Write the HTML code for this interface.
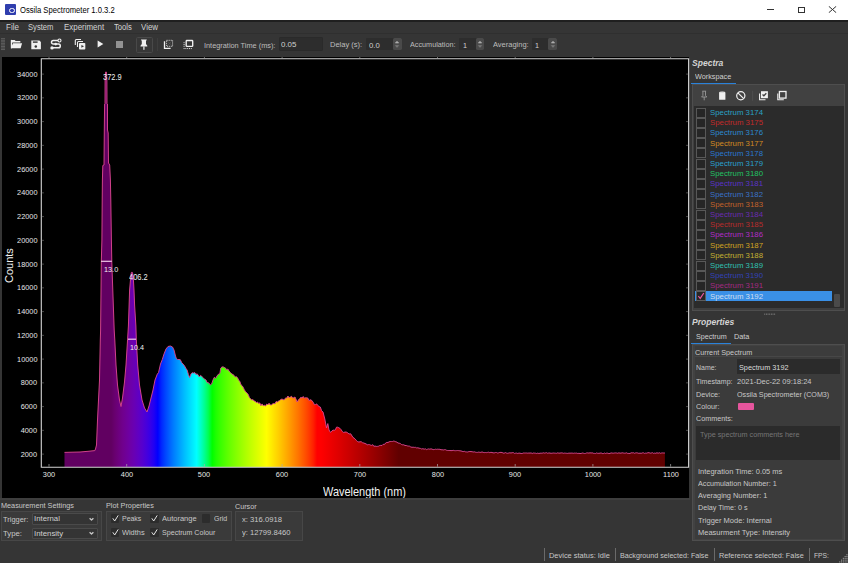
<!DOCTYPE html><html><head><meta charset='utf-8'><style>
*{margin:0;padding:0;box-sizing:border-box}
html,body{width:848px;height:563px;overflow:hidden;background:#353535}
body{position:relative;font-family:"Liberation Sans",sans-serif;color:#c8c8c8;font-size:7.5px}
.a{position:absolute;white-space:nowrap}
.t{position:absolute;white-space:nowrap;line-height:10px}
</style></head><body><div class="a" style="left:0;top:0;width:848px;height:20px;background:#fff"></div><div class="a" style="left:4.7px;top:4px;width:10.9px;height:10.6px;background:#2f3eae;border-radius:1px"></div><div class="a" style="left:8.8px;top:7.6px;width:5.8px;height:5.8px;border:1.4px solid #fff;border-radius:50%"></div><div class="t" style="top:4.00px;font-size:9.03px;line-height:12px;color:#000;left:19.50px;transform-origin:0 50%;transform:scaleX(0.8475);">Ossila Spectrometer 1.0.3.2</div><div class="a" style="left:767px;top:9px;width:7px;height:1px;background:#333"></div><div class="a" style="left:797.5px;top:6.5px;width:7px;height:6px;border:1px solid #333"></div><svg class="a" style="left:828px;top:6px" width="9" height="7" viewBox="0 0 9 7"><path d="M0.8,0.3 L8.2,6.7 M8.2,0.3 L0.8,6.7" stroke="#333" stroke-width="1"/></svg><div class="a" style="left:0;top:20.2px;width:848px;height:1.6px;background:#1f1f1f"></div><div class="t" style="top:21.40px;font-size:8.30px;line-height:12px;color:#d2d2d2;left:6.00px;transform-origin:0 50%;transform:scaleX(0.9645);">File</div><div class="t" style="top:21.40px;font-size:8.30px;line-height:12px;color:#d2d2d2;left:27.80px;transform-origin:0 50%;transform:scaleX(0.9179);">System</div><div class="t" style="top:21.40px;font-size:8.30px;line-height:12px;color:#d2d2d2;left:63.70px;transform-origin:0 50%;transform:scaleX(0.9552);">Experiment</div><div class="t" style="top:21.40px;font-size:8.30px;line-height:12px;color:#d2d2d2;left:113.80px;transform-origin:0 50%;transform:scaleX(0.9238);">Tools</div><div class="t" style="top:21.40px;font-size:8.30px;line-height:12px;color:#d2d2d2;left:141.30px;transform-origin:0 50%;transform:scaleX(0.9529);">View</div><div class="a" style="left:0.00px;top:33.40px;width:848.00px;height:0.70px;background:#2f2f2f;"></div><svg class="a" style="left:1px;top:38.4px" width="4.5" height="12.5" viewBox="0 0 4.5 12.5"><rect x="0.4" y="0.20" width="1.2" height="1" fill="#7c7c7c"/><rect x="0.4" y="1.75" width="1.2" height="1" fill="#7c7c7c"/><rect x="0.4" y="3.30" width="1.2" height="1" fill="#7c7c7c"/><rect x="0.4" y="4.85" width="1.2" height="1" fill="#7c7c7c"/><rect x="0.4" y="6.40" width="1.2" height="1" fill="#7c7c7c"/><rect x="0.4" y="7.95" width="1.2" height="1" fill="#7c7c7c"/><rect x="0.4" y="9.50" width="1.2" height="1" fill="#7c7c7c"/><rect x="0.4" y="11.05" width="1.2" height="1" fill="#7c7c7c"/><rect x="2.4" y="0.20" width="1.2" height="1" fill="#7c7c7c"/><rect x="2.4" y="1.75" width="1.2" height="1" fill="#7c7c7c"/><rect x="2.4" y="3.30" width="1.2" height="1" fill="#7c7c7c"/><rect x="2.4" y="4.85" width="1.2" height="1" fill="#7c7c7c"/><rect x="2.4" y="6.40" width="1.2" height="1" fill="#7c7c7c"/><rect x="2.4" y="7.95" width="1.2" height="1" fill="#7c7c7c"/><rect x="2.4" y="9.50" width="1.2" height="1" fill="#7c7c7c"/><rect x="2.4" y="11.05" width="1.2" height="1" fill="#7c7c7c"/></svg><svg class="a" style="left:10px;top:39px" width="13" height="11" viewBox="0 0 13 11">
<path d="M0.9,1.2 Q0.9,0.9 1.2,0.9 L4.6,0.9 L5.7,2 L10.1,2 Q10.4,2 10.4,2.3 L10.4,8 L0.9,9.3 Z" fill="#f0f0f0"/>
<path d="M2.3,3.5 L12.6,3.5 L11,9.8 L0.4,9.8 Z" fill="#353535"/>
<path d="M2.9,4.3 L12.1,4.3 L10.6,9.3 L0.9,9.3 Z" fill="#f0f0f0"/>
<rect x="0.9" y="0.9" width="1.1" height="8.4" fill="#f0f0f0"/></svg><svg class="a" style="left:31px;top:39.5px" width="10.5" height="10" viewBox="0 0 10.5 10">
<path d="M0.3,0.5 L8.4,0.5 L9.9,2 L9.9,9.2 L0.3,9.2 Z" fill="#f0f0f0"/>
<rect x="1.9" y="1.4" width="4.7" height="1.4" fill="#353535"/>
<circle cx="4.8" cy="6.6" r="1.25" fill="#353535"/></svg><svg class="a" style="left:48px;top:37px" width="16" height="15" viewBox="0 0 16 15">
<path d="M10,3.5 L5.3,3.5 A1.8,1.8 0 0 0 5.3,7.1 L10.5,7.1 A1.8,1.8 0 0 1 10.5,10.7 L4.5,10.7" fill="none" stroke="#f0f0f0" stroke-width="1.5"/>
<circle cx="11.5" cy="3.5" r="1.5" fill="none" stroke="#f0f0f0" stroke-width="1.1"/>
<circle cx="4" cy="10.9" r="1.7" fill="#f0f0f0"/>
<circle cx="7.7" cy="7.1" r="1.3" fill="#f0f0f0"/></svg><svg class="a" style="left:72px;top:37px" width="16" height="15" viewBox="0 0 16 15">
<path d="M3.3,8 L3.3,3.6 Q3.3,2.5 4.4,2.5 L9,2.5" fill="none" stroke="#f0f0f0" stroke-width="1.1"/>
<path d="M5.5,10 L5.5,5.6 Q5.5,4.5 6.6,4.5 L11,4.5" fill="none" stroke="#f0f0f0" stroke-width="1.1"/>
<rect x="7" y="6" width="6.3" height="6.5" rx="0.8" fill="#f0f0f0"/>
<path d="M9.4,7.9 L12,9.3 L9.4,10.7 Z" fill="#353535"/></svg><svg class="a" style="left:97px;top:40.1px" width="7" height="8" viewBox="0 0 7 8"><path d="M0.6,0.5 L6.3,4 L0.6,7.5 Z" fill="#f0f0f0"/></svg><div class="a" style="left:116.20px;top:41.20px;width:6.60px;height:6.70px;background:#929292;"></div><div class="a" style="left:135.50px;top:36.50px;width:17.00px;height:16.50px;background:#373737;border:1px solid #494949;border-radius:1.5px"></div><svg class="a" style="left:140px;top:38.5px" width="8" height="12" viewBox="0 0 8 12">
<path d="M0.9,0.4 L6.9,0.4 L6.3,1.6 L6,2.2 L6,4.9 L7.3,6.8 L7.3,7.4 L0.5,7.4 L0.5,6.8 L1.8,4.9 L1.8,2.2 L1.5,1.6 Z" fill="#f0f0f0"/>
<rect x="3.3" y="7.4" width="1.2" height="3.4" fill="#f0f0f0"/></svg><div class="a" style="left:157.00px;top:38.00px;width:0.70px;height:13.00px;background:#3e3e3e;"></div><svg class="a" style="left:160px;top:37px" width="16" height="15" viewBox="0 0 16 15">
<path d="M4.5,4.2 L4.5,11.3 L10.6,11.3" fill="none" stroke="#f0f0f0" stroke-width="1.3"/>
<rect x="6.6" y="3.3" width="6" height="6" fill="none" stroke="#f0f0f0" stroke-width="0.9" stroke-dasharray="1,1.05"/>
<path d="M7,3.7 L12.2,8.9 M12.2,3.7 L7,8.9" stroke="#f0f0f0" stroke-width="0.5" opacity="0.25"/></svg><svg class="a" style="left:180px;top:37px" width="16" height="15" viewBox="0 0 16 15">
<rect x="6.2" y="3.5" width="6.5" height="5.9" rx="0.7" fill="none" stroke="#f0f0f0" stroke-width="1.35"/><rect x="3.6" y="5.2" width="0.95" height="0.95" fill="#f0f0f0"/><rect x="3.6" y="7.0" width="0.95" height="0.95" fill="#f0f0f0"/><rect x="3.6" y="8.8" width="0.95" height="0.95" fill="#f0f0f0"/><rect x="3.6" y="11.1" width="0.95" height="0.95" fill="#f0f0f0"/><rect x="5.4" y="11.1" width="0.95" height="0.95" fill="#f0f0f0"/><rect x="7.2" y="11.1" width="0.95" height="0.95" fill="#f0f0f0"/><rect x="9.0" y="11.1" width="0.95" height="0.95" fill="#f0f0f0"/><rect x="10.8" y="11.1" width="0.95" height="0.95" fill="#f0f0f0"/></svg><div class="t" style="top:39.60px;font-size:8.00px;line-height:12px;color:#bdbdbd;left:204.10px;transform-origin:0 50%;transform:scaleX(0.9177);">Integration Time (ms):</div><div class="a" style="left:279.30px;top:37.00px;width:43.60px;height:13.90px;background:#2d2d2d;border:1px solid #2a2a2a;border-radius:1px"></div><div class="t" style="top:39.20px;font-size:8.00px;line-height:12px;color:#d0d0d0;left:280.70px;transform-origin:0 50%;transform:scaleX(0.9891);">0.05</div><div class="t" style="top:39.40px;font-size:8.00px;line-height:12px;color:#bdbdbd;left:330.20px;transform-origin:0 50%;transform:scaleX(0.9408);">Delay (s):</div><div class="a" style="left:366.20px;top:37.80px;width:35.70px;height:12.50px;background:#2d2d2d;border-radius:1px"></div><div class="a" style="left:393.00px;top:37.80px;width:8.90px;height:12.50px;background:#4a4a4a;border-radius:1.5px"></div><svg class="a" style="left:394.45px;top:37.8px" width="6" height="12.5" viewBox="0 0 6 12.5"><path d="M1.3,5 L3,3.2 L4.7,5 Z" fill="#b0b0b0" stroke="#b0b0b0" stroke-width="0.6" stroke-linejoin="round"/><path d="M1.3,7.6 L3,9.4 L4.7,7.6 Z" fill="#7a7a7a" stroke="#7a7a7a" stroke-width="0.6" stroke-linejoin="round"/></svg><div class="t" style="top:39.60px;font-size:8.00px;line-height:12px;color:#d0d0d0;left:368.80px;transform-origin:0 50%;transform:scaleX(0.9621);">0.0</div><div class="t" style="top:39.40px;font-size:8.00px;line-height:12px;color:#bdbdbd;left:409.60px;transform-origin:0 50%;transform:scaleX(0.9055);">Accumulation:</div><div class="a" style="left:458.70px;top:37.80px;width:25.50px;height:12.50px;background:#2d2d2d;border-radius:1px"></div><div class="a" style="left:475.80px;top:37.80px;width:8.40px;height:12.50px;background:#4a4a4a;border-radius:1.5px"></div><svg class="a" style="left:477.00px;top:37.8px" width="6" height="12.5" viewBox="0 0 6 12.5"><path d="M1.3,5 L3,3.2 L4.7,5 Z" fill="#b0b0b0" stroke="#b0b0b0" stroke-width="0.6" stroke-linejoin="round"/><path d="M1.3,7.6 L3,9.4 L4.7,7.6 Z" fill="#7a7a7a" stroke="#7a7a7a" stroke-width="0.6" stroke-linejoin="round"/></svg><div class="t" style="top:39.60px;font-size:8.00px;line-height:12px;color:#d0d0d0;left:462.50px;transform-origin:0 50%;transform:scaleX(0.8990);">1</div><div class="t" style="top:39.40px;font-size:8.00px;line-height:12px;color:#bdbdbd;left:492.60px;transform-origin:0 50%;transform:scaleX(0.9370);">Averaging:</div><div class="a" style="left:531.90px;top:37.80px;width:25.40px;height:12.50px;background:#2d2d2d;border-radius:1px"></div><div class="a" style="left:548.30px;top:37.80px;width:9.00px;height:12.50px;background:#4a4a4a;border-radius:1.5px"></div><svg class="a" style="left:549.80px;top:37.8px" width="6" height="12.5" viewBox="0 0 6 12.5"><path d="M1.3,5 L3,3.2 L4.7,5 Z" fill="#b0b0b0" stroke="#b0b0b0" stroke-width="0.6" stroke-linejoin="round"/><path d="M1.3,7.6 L3,9.4 L4.7,7.6 Z" fill="#7a7a7a" stroke="#7a7a7a" stroke-width="0.6" stroke-linejoin="round"/></svg><div class="t" style="top:39.60px;font-size:8.00px;line-height:12px;color:#d0d0d0;left:535.30px;transform-origin:0 50%;transform:scaleX(0.8990);">1</div><div class="a" style="left:2.00px;top:56.50px;width:687.00px;height:441.50px;background:#000;"></div><svg class="a" style="left:0;top:0" width="848" height="563" viewBox="0 0 848 563"><defs><linearGradient id="sg" gradientUnits="userSpaceOnUse" x1="49" y1="0" x2="670.6" y2="0"><stop offset="0.0000" stop-color="rgb(97,0,97)"/><stop offset="0.0063" stop-color="rgb(97,0,97)"/><stop offset="0.0125" stop-color="rgb(97,0,97)"/><stop offset="0.0187" stop-color="rgb(97,0,97)"/><stop offset="0.0250" stop-color="rgb(97,0,97)"/><stop offset="0.0312" stop-color="rgb(97,0,97)"/><stop offset="0.0375" stop-color="rgb(97,0,97)"/><stop offset="0.0437" stop-color="rgb(97,0,97)"/><stop offset="0.0500" stop-color="rgb(97,0,97)"/><stop offset="0.0563" stop-color="rgb(97,0,97)"/><stop offset="0.0625" stop-color="rgb(97,0,97)"/><stop offset="0.0688" stop-color="rgb(97,0,97)"/><stop offset="0.0750" stop-color="rgb(97,0,97)"/><stop offset="0.0813" stop-color="rgb(97,0,97)"/><stop offset="0.0875" stop-color="rgb(97,0,97)"/><stop offset="0.0938" stop-color="rgb(97,0,97)"/><stop offset="0.1000" stop-color="rgb(97,0,97)"/><stop offset="0.1062" stop-color="rgb(105,0,112)"/><stop offset="0.1125" stop-color="rgb(109,0,127)"/><stop offset="0.1187" stop-color="rgb(112,0,141)"/><stop offset="0.1250" stop-color="rgb(111,0,154)"/><stop offset="0.1313" stop-color="rgb(109,0,168)"/><stop offset="0.1375" stop-color="rgb(104,0,181)"/><stop offset="0.1437" stop-color="rgb(96,0,194)"/><stop offset="0.1500" stop-color="rgb(86,0,206)"/><stop offset="0.1562" stop-color="rgb(72,0,219)"/><stop offset="0.1625" stop-color="rgb(55,0,231)"/><stop offset="0.1688" stop-color="rgb(33,0,243)"/><stop offset="0.1750" stop-color="rgb(0,0,255)"/><stop offset="0.1812" stop-color="rgb(0,40,255)"/><stop offset="0.1875" stop-color="rgb(0,70,255)"/><stop offset="0.1938" stop-color="rgb(0,97,255)"/><stop offset="0.2000" stop-color="rgb(0,123,255)"/><stop offset="0.2062" stop-color="rgb(0,146,255)"/><stop offset="0.2125" stop-color="rgb(0,169,255)"/><stop offset="0.2188" stop-color="rgb(0,192,255)"/><stop offset="0.2250" stop-color="rgb(0,213,255)"/><stop offset="0.2313" stop-color="rgb(0,234,255)"/><stop offset="0.2375" stop-color="rgb(0,255,255)"/><stop offset="0.2437" stop-color="rgb(0,255,203)"/><stop offset="0.2500" stop-color="rgb(0,255,146)"/><stop offset="0.2562" stop-color="rgb(0,255,84)"/><stop offset="0.2625" stop-color="rgb(0,255,0)"/><stop offset="0.2687" stop-color="rgb(31,255,0)"/><stop offset="0.2750" stop-color="rgb(54,255,0)"/><stop offset="0.2812" stop-color="rgb(74,255,0)"/><stop offset="0.2875" stop-color="rgb(94,255,0)"/><stop offset="0.2938" stop-color="rgb(112,255,0)"/><stop offset="0.3000" stop-color="rgb(129,255,0)"/><stop offset="0.3063" stop-color="rgb(146,255,0)"/><stop offset="0.3125" stop-color="rgb(163,255,0)"/><stop offset="0.3187" stop-color="rgb(179,255,0)"/><stop offset="0.3250" stop-color="rgb(195,255,0)"/><stop offset="0.3312" stop-color="rgb(210,255,0)"/><stop offset="0.3375" stop-color="rgb(225,255,0)"/><stop offset="0.3438" stop-color="rgb(240,255,0)"/><stop offset="0.3500" stop-color="rgb(255,255,0)"/><stop offset="0.3563" stop-color="rgb(255,239,0)"/><stop offset="0.3625" stop-color="rgb(255,223,0)"/><stop offset="0.3688" stop-color="rgb(255,207,0)"/><stop offset="0.3750" stop-color="rgb(255,190,0)"/><stop offset="0.3812" stop-color="rgb(255,173,0)"/><stop offset="0.3875" stop-color="rgb(255,155,0)"/><stop offset="0.3937" stop-color="rgb(255,137,0)"/><stop offset="0.4000" stop-color="rgb(255,119,0)"/><stop offset="0.4062" stop-color="rgb(255,99,0)"/><stop offset="0.4125" stop-color="rgb(255,79,0)"/><stop offset="0.4188" stop-color="rgb(255,57,0)"/><stop offset="0.4250" stop-color="rgb(255,33,0)"/><stop offset="0.4313" stop-color="rgb(255,0,0)"/><stop offset="0.4375" stop-color="rgb(255,0,0)"/><stop offset="0.4437" stop-color="rgb(248,0,0)"/><stop offset="0.4500" stop-color="rgb(241,0,0)"/><stop offset="0.4562" stop-color="rgb(233,0,0)"/><stop offset="0.4625" stop-color="rgb(226,0,0)"/><stop offset="0.4688" stop-color="rgb(219,0,0)"/><stop offset="0.4750" stop-color="rgb(211,0,0)"/><stop offset="0.4813" stop-color="rgb(204,0,0)"/><stop offset="0.4875" stop-color="rgb(196,0,0)"/><stop offset="0.4938" stop-color="rgb(188,0,0)"/><stop offset="0.5000" stop-color="rgb(181,0,0)"/><stop offset="0.5062" stop-color="rgb(173,0,0)"/><stop offset="0.5125" stop-color="rgb(165,0,0)"/><stop offset="0.5188" stop-color="rgb(157,0,0)"/><stop offset="0.5250" stop-color="rgb(149,0,0)"/><stop offset="0.5312" stop-color="rgb(141,0,0)"/><stop offset="0.5375" stop-color="rgb(132,0,0)"/><stop offset="0.5437" stop-color="rgb(124,0,0)"/><stop offset="0.5500" stop-color="rgb(115,0,0)"/><stop offset="0.5563" stop-color="rgb(106,0,0)"/><stop offset="0.5625" stop-color="rgb(97,0,0)"/><stop offset="0.5687" stop-color="rgb(97,0,0)"/><stop offset="0.5750" stop-color="rgb(97,0,0)"/><stop offset="0.5813" stop-color="rgb(97,0,0)"/><stop offset="0.5875" stop-color="rgb(97,0,0)"/><stop offset="0.5938" stop-color="rgb(97,0,0)"/><stop offset="0.6000" stop-color="rgb(97,0,0)"/><stop offset="0.6062" stop-color="rgb(97,0,0)"/><stop offset="0.6125" stop-color="rgb(97,0,0)"/><stop offset="0.6188" stop-color="rgb(97,0,0)"/><stop offset="0.6250" stop-color="rgb(97,0,0)"/><stop offset="1.0000" stop-color="rgb(97,0,0)"/></linearGradient></defs><path d="M64.5,467 L64.5,452.4 L72.0,452.2 L80.0,452.0 L88.0,451.3 L94.8,450.6 L95.5,449.0 L96.5,445.0 L97.5,420.0 L98.5,400.0 L99.5,380.0 L100.3,340.0 L100.6,330.0 L101.3,262.0 L101.9,240.0 L102.2,200.0 L102.4,180.0 L102.8,165.5 L104.0,165.0 L104.3,130.0 L104.6,104.0 L105.0,103.5 L105.1,80.0 L105.6,72.0 L106.4,72.0 L106.9,80.0 L107.0,103.5 L107.5,104.0 L107.5,130.0 L108.2,133.0 L108.5,163.0 L109.7,165.0 L110.4,180.0 L110.8,200.0 L111.4,240.0 L111.8,262.0 L114.2,330.0 L114.8,340.0 L116.0,365.0 L117.5,385.0 L119.5,400.0 L121.0,406.5 L122.5,398.0 L124.5,382.0 L126.0,365.0 L127.6,339.0 L128.4,326.0 L129.1,305.0 L129.6,290.0 L130.8,276.0 L131.4,272.4 L132.4,272.4 L133.2,276.0 L134.0,290.0 L134.6,305.0 L135.9,326.0 L136.3,339.0 L137.7,365.0 L139.5,385.0 L142.0,400.0 L144.5,408.0 L147.0,412.0 L149.0,406.0 L151.0,398.0 L153.0,390.0 L155.0,380.0 L156.2,377.0 L157.3,374.1 L158.5,372.7 L160.5,364.0 L162.3,359.5 L164.0,354.0 L166.0,349.0 L168.0,346.5 L170.4,346.0 L172.5,347.0 L174.0,350.0 L175.5,356.0 L176.4,358.6 L177.7,359.5 L179.0,359.5 L180.3,359.7 L181.7,362.6 L183.0,364.0 L184.5,365.8 L186.0,368.5 L187.2,370.2 L188.4,374.5 L189.6,377.5 L191.1,373.7 L192.5,372.7 L193.7,373.1 L194.8,372.6 L196.0,374.5 L197.1,373.8 L198.3,375.3 L199.4,377.0 L200.5,375.4 L201.7,376.2 L202.8,377.5 L204.4,379.1 L206.0,380.0 L207.1,382.6 L208.2,382.7 L209.3,383.4 L210.4,385.0 L211.7,383.9 L213.0,380.0 L214.3,377.3 L215.7,378.4 L217.0,376.0 L218.4,374.2 L219.8,373.7 L220.8,368.0 L222.0,366.9 L223.2,366.9 L224.3,367.4 L225.5,368.0 L226.7,369.9 L227.8,369.0 L229.0,371.0 L230.3,372.4 L231.7,373.8 L233.0,374.6 L234.1,375.4 L235.3,377.0 L236.4,376.7 L237.6,377.8 L238.7,380.3 L239.8,381.3 L240.9,384.6 L242.1,385.7 L243.2,387.3 L244.3,389.7 L245.6,391.7 L246.8,393.0 L248.1,394.2 L249.4,397.4 L250.6,398.9 L251.9,400.0 L253.0,399.6 L254.1,401.0 L255.3,401.3 L256.4,402.7 L257.5,402.0 L258.6,403.4 L259.8,402.9 L260.9,405.7 L262.1,403.9 L263.2,405.8 L264.4,405.3 L265.6,406.1 L266.7,404.0 L267.9,404.8 L269.1,403.2 L270.2,404.9 L271.4,404.9 L272.6,403.9 L273.8,403.5 L275.0,403.8 L276.1,401.5 L277.3,402.0 L278.5,401.1 L279.6,400.5 L280.8,399.5 L282.0,399.0 L283.2,399.7 L284.4,399.7 L285.6,397.9 L286.8,398.1 L287.9,396.0 L289.1,397.6 L290.3,397.1 L291.5,396.3 L292.7,398.0 L293.8,397.7 L295.0,397.0 L297.2,402.0 L298.5,399.8 L299.7,398.5 L301.0,397.3 L302.1,398.1 L303.2,396.5 L304.4,398.2 L305.5,397.7 L306.6,397.8 L307.8,398.0 L308.9,400.5 L310.0,400.0 L311.1,399.8 L312.2,401.0 L313.3,402.4 L314.4,404.7 L315.5,404.5 L316.7,403.9 L317.9,405.6 L319.1,406.5 L320.3,407.0 L321.6,410.7 L323.0,412.0 L324.8,419.0 L326.5,428.0 L327.8,423.6 L329.0,430.0 L330.5,432.4 L333.0,430.0 L334.2,430.3 L335.4,429.7 L336.5,427.2 L337.7,427.2 L338.8,427.7 L339.9,428.3 L341.0,429.5 L342.3,431.5 L343.7,432.5 L345.0,432.0 L346.3,432.1 L347.7,432.8 L349.0,434.0 L350.7,433.8 L353.0,437.5 L354.1,438.1 L355.2,439.1 L356.4,440.5 L357.5,441.5 L358.8,442.0 L360.0,441.8 L361.2,441.7 L362.5,442.7 L363.8,443.0 L365.0,443.5 L366.1,443.9 L367.2,444.8 L368.3,444.6 L369.4,444.6 L370.6,445.1 L371.7,445.4 L372.8,444.7 L373.9,446.4 L375.0,446.0 L376.2,446.4 L377.3,446.4 L378.5,446.2 L379.7,445.5 L380.8,445.4 L382.0,445.5 L383.2,444.3 L384.4,444.5 L385.6,443.0 L386.8,442.4 L388.0,442.5 L389.1,441.8 L390.2,441.5 L391.4,441.5 L392.5,441.5 L393.6,441.1 L394.7,441.3 L395.8,441.8 L396.9,442.1 L398.0,443.0 L399.2,443.2 L400.3,443.5 L401.5,444.5 L402.7,444.8 L403.8,444.8 L405.0,445.5 L406.2,445.5 L407.3,445.9 L408.5,446.1 L409.6,446.2 L410.8,447.0 L412.0,447.3 L413.1,447.2 L414.3,447.4 L415.4,447.3 L416.6,447.9 L417.9,447.8 L419.1,448.2 L420.4,448.4 L421.7,449.0 L422.9,448.7 L424.2,449.2 L425.3,448.8 L426.5,449.6 L427.6,449.2 L428.7,448.9 L429.9,449.2 L431.0,448.8 L432.1,449.2 L433.2,449.6 L434.4,449.5 L435.5,449.2 L436.6,449.4 L437.7,449.2 L438.8,449.3 L439.9,449.3 L441.0,449.8 L442.1,449.7 L443.2,450.0 L444.3,449.7 L445.5,449.7 L446.6,450.3 L447.7,450.5 L448.8,450.5 L449.9,450.5 L451.0,450.6 L452.1,450.6 L453.2,450.3 L454.3,450.6 L455.4,450.7 L456.5,450.6 L457.6,450.5 L458.7,450.6 L459.9,450.8 L461.0,450.9 L462.1,451.3 L463.2,451.6 L464.3,451.3 L465.4,451.8 L466.5,451.9 L467.6,452.0 L468.8,451.6 L469.9,451.5 L471.0,451.6 L472.1,451.7 L473.2,452.0 L474.3,451.8 L475.4,452.2 L476.5,452.4 L477.6,452.4 L478.7,452.1 L479.8,452.3 L480.9,452.4 L482.0,451.9 L483.2,452.4 L484.3,452.6 L485.4,452.5 L486.5,452.6 L487.6,452.4 L488.7,452.2 L489.8,452.7 L490.9,452.3 L492.0,452.5 L493.1,452.8 L494.2,452.9 L495.4,452.5 L496.5,452.5 L497.6,453.0 L498.7,452.8 L499.8,452.4 L501.0,452.4 L502.1,452.5 L503.2,453.1 L504.3,453.1 L505.4,452.6 L506.6,453.1 L507.7,453.3 L508.8,453.0 L509.9,452.8 L511.0,453.0 L512.2,452.7 L513.3,452.6 L514.4,453.4 L515.5,453.2 L516.6,453.1 L517.8,453.5 L518.9,453.1 L520.0,453.2 L521.1,453.5 L522.2,453.5 L523.3,453.0 L524.4,453.0 L525.6,453.0 L526.7,453.0 L527.8,453.2 L528.9,453.0 L530.0,453.1 L531.1,452.9 L532.2,453.5 L533.3,453.0 L534.4,453.1 L535.6,453.2 L536.7,453.5 L537.8,453.1 L538.9,453.5 L540.0,453.2 L541.1,453.2 L542.2,453.2 L543.3,452.8 L544.4,453.1 L545.6,452.9 L546.7,452.7 L547.8,453.4 L548.9,452.9 L550.0,453.1 L551.1,453.3 L552.2,453.2 L553.3,453.0 L554.4,453.1 L555.6,453.2 L556.7,453.3 L557.8,452.8 L558.9,453.2 L560.0,453.1 L561.1,452.9 L562.2,452.9 L563.3,453.3 L564.4,453.1 L565.6,453.2 L566.7,453.3 L567.8,453.4 L568.9,453.1 L570.0,453.2 L571.1,453.1 L572.2,453.1 L573.3,453.3 L574.4,453.1 L575.6,453.2 L576.7,453.1 L577.8,453.5 L578.9,453.3 L580.0,453.5 L581.1,453.5 L582.2,453.0 L583.3,453.2 L584.4,453.5 L585.6,453.4 L586.7,452.9 L587.8,452.9 L588.9,453.1 L590.0,452.8 L591.1,453.0 L592.2,452.8 L593.3,453.3 L594.4,453.4 L595.6,453.5 L596.7,452.9 L597.8,453.4 L598.9,453.3 L600.0,453.2 L601.1,452.9 L602.2,453.5 L603.3,453.6 L604.4,453.0 L605.6,453.5 L606.7,453.1 L607.8,453.2 L608.9,453.6 L610.0,453.4 L611.1,452.9 L612.2,453.1 L613.3,453.2 L614.4,453.0 L615.6,452.9 L616.7,453.0 L617.8,453.3 L618.9,452.8 L620.0,453.2 L621.1,453.1 L622.2,452.8 L623.3,453.0 L624.4,453.2 L625.6,453.1 L626.7,452.8 L627.8,453.5 L628.9,453.4 L630.0,453.5 L631.1,452.8 L632.2,452.9 L633.3,452.7 L634.4,453.3 L635.6,452.9 L636.7,452.8 L637.8,453.0 L638.9,453.4 L640.0,453.1 L641.1,453.4 L642.3,452.9 L643.4,452.8 L644.5,453.4 L645.7,453.1 L646.8,453.2 L647.9,452.7 L649.1,452.7 L650.2,453.2 L651.3,453.0 L652.5,452.7 L653.6,453.4 L654.7,453.1 L655.8,453.3 L657.0,452.7 L658.1,453.3 L659.2,452.7 L660.4,453.3 L661.5,453.0 L662.6,452.9 L663.8,453.0 L664.9,453.0 L664.9,467 Z" fill="url(#sg)"/><path d="M64.5,452.4 L72.0,452.2 L80.0,452.0 L88.0,451.3 L94.8,450.6 L95.5,449.0 L96.5,445.0 L97.5,420.0 L98.5,400.0 L99.5,380.0 L100.3,340.0 L100.6,330.0 L101.3,262.0 L101.9,240.0 L102.2,200.0 L102.4,180.0 L102.8,165.5 L104.0,165.0 L104.3,130.0 L104.6,104.0 L105.0,103.5 L105.1,80.0 L105.6,72.0 L106.4,72.0 L106.9,80.0 L107.0,103.5 L107.5,104.0 L107.5,130.0 L108.2,133.0 L108.5,163.0 L109.7,165.0 L110.4,180.0 L110.8,200.0 L111.4,240.0 L111.8,262.0 L114.2,330.0 L114.8,340.0 L116.0,365.0 L117.5,385.0 L119.5,400.0 L121.0,406.5 L122.5,398.0 L124.5,382.0 L126.0,365.0 L127.6,339.0 L128.4,326.0 L129.1,305.0 L129.6,290.0 L130.8,276.0 L131.4,272.4 L132.4,272.4 L133.2,276.0 L134.0,290.0 L134.6,305.0 L135.9,326.0 L136.3,339.0 L137.7,365.0 L139.5,385.0 L142.0,400.0 L144.5,408.0 L147.0,412.0 L149.0,406.0 L151.0,398.0 L153.0,390.0 L155.0,380.0 L156.2,377.0 L157.3,374.1 L158.5,372.7 L160.5,364.0 L162.3,359.5 L164.0,354.0 L166.0,349.0 L168.0,346.5 L170.4,346.0 L172.5,347.0 L174.0,350.0 L175.5,356.0 L176.4,358.6 L177.7,359.5 L179.0,359.5 L180.3,359.7 L181.7,362.6 L183.0,364.0 L184.5,365.8 L186.0,368.5 L187.2,370.2 L188.4,374.5 L189.6,377.5 L191.1,373.7 L192.5,372.7 L193.7,373.1 L194.8,372.6 L196.0,374.5 L197.1,373.8 L198.3,375.3 L199.4,377.0 L200.5,375.4 L201.7,376.2 L202.8,377.5 L204.4,379.1 L206.0,380.0 L207.1,382.6 L208.2,382.7 L209.3,383.4 L210.4,385.0 L211.7,383.9 L213.0,380.0 L214.3,377.3 L215.7,378.4 L217.0,376.0 L218.4,374.2 L219.8,373.7 L220.8,368.0 L222.0,366.9 L223.2,366.9 L224.3,367.4 L225.5,368.0 L226.7,369.9 L227.8,369.0 L229.0,371.0 L230.3,372.4 L231.7,373.8 L233.0,374.6 L234.1,375.4 L235.3,377.0 L236.4,376.7 L237.6,377.8 L238.7,380.3 L239.8,381.3 L240.9,384.6 L242.1,385.7 L243.2,387.3 L244.3,389.7 L245.6,391.7 L246.8,393.0 L248.1,394.2 L249.4,397.4 L250.6,398.9 L251.9,400.0 L253.0,399.6 L254.1,401.0 L255.3,401.3 L256.4,402.7 L257.5,402.0 L258.6,403.4 L259.8,402.9 L260.9,405.7 L262.1,403.9 L263.2,405.8 L264.4,405.3 L265.6,406.1 L266.7,404.0 L267.9,404.8 L269.1,403.2 L270.2,404.9 L271.4,404.9 L272.6,403.9 L273.8,403.5 L275.0,403.8 L276.1,401.5 L277.3,402.0 L278.5,401.1 L279.6,400.5 L280.8,399.5 L282.0,399.0 L283.2,399.7 L284.4,399.7 L285.6,397.9 L286.8,398.1 L287.9,396.0 L289.1,397.6 L290.3,397.1 L291.5,396.3 L292.7,398.0 L293.8,397.7 L295.0,397.0 L297.2,402.0 L298.5,399.8 L299.7,398.5 L301.0,397.3 L302.1,398.1 L303.2,396.5 L304.4,398.2 L305.5,397.7 L306.6,397.8 L307.8,398.0 L308.9,400.5 L310.0,400.0 L311.1,399.8 L312.2,401.0 L313.3,402.4 L314.4,404.7 L315.5,404.5 L316.7,403.9 L317.9,405.6 L319.1,406.5 L320.3,407.0 L321.6,410.7 L323.0,412.0 L324.8,419.0 L326.5,428.0 L327.8,423.6 L329.0,430.0 L330.5,432.4 L333.0,430.0 L334.2,430.3 L335.4,429.7 L336.5,427.2 L337.7,427.2 L338.8,427.7 L339.9,428.3 L341.0,429.5 L342.3,431.5 L343.7,432.5 L345.0,432.0 L346.3,432.1 L347.7,432.8 L349.0,434.0 L350.7,433.8 L353.0,437.5 L354.1,438.1 L355.2,439.1 L356.4,440.5 L357.5,441.5 L358.8,442.0 L360.0,441.8 L361.2,441.7 L362.5,442.7 L363.8,443.0 L365.0,443.5 L366.1,443.9 L367.2,444.8 L368.3,444.6 L369.4,444.6 L370.6,445.1 L371.7,445.4 L372.8,444.7 L373.9,446.4 L375.0,446.0 L376.2,446.4 L377.3,446.4 L378.5,446.2 L379.7,445.5 L380.8,445.4 L382.0,445.5 L383.2,444.3 L384.4,444.5 L385.6,443.0 L386.8,442.4 L388.0,442.5 L389.1,441.8 L390.2,441.5 L391.4,441.5 L392.5,441.5 L393.6,441.1 L394.7,441.3 L395.8,441.8 L396.9,442.1 L398.0,443.0 L399.2,443.2 L400.3,443.5 L401.5,444.5 L402.7,444.8 L403.8,444.8 L405.0,445.5 L406.2,445.5 L407.3,445.9 L408.5,446.1 L409.6,446.2 L410.8,447.0 L412.0,447.3 L413.1,447.2 L414.3,447.4 L415.4,447.3 L416.6,447.9 L417.9,447.8 L419.1,448.2 L420.4,448.4 L421.7,449.0 L422.9,448.7 L424.2,449.2 L425.3,448.8 L426.5,449.6 L427.6,449.2 L428.7,448.9 L429.9,449.2 L431.0,448.8 L432.1,449.2 L433.2,449.6 L434.4,449.5 L435.5,449.2 L436.6,449.4 L437.7,449.2 L438.8,449.3 L439.9,449.3 L441.0,449.8 L442.1,449.7 L443.2,450.0 L444.3,449.7 L445.5,449.7 L446.6,450.3 L447.7,450.5 L448.8,450.5 L449.9,450.5 L451.0,450.6 L452.1,450.6 L453.2,450.3 L454.3,450.6 L455.4,450.7 L456.5,450.6 L457.6,450.5 L458.7,450.6 L459.9,450.8 L461.0,450.9 L462.1,451.3 L463.2,451.6 L464.3,451.3 L465.4,451.8 L466.5,451.9 L467.6,452.0 L468.8,451.6 L469.9,451.5 L471.0,451.6 L472.1,451.7 L473.2,452.0 L474.3,451.8 L475.4,452.2 L476.5,452.4 L477.6,452.4 L478.7,452.1 L479.8,452.3 L480.9,452.4 L482.0,451.9 L483.2,452.4 L484.3,452.6 L485.4,452.5 L486.5,452.6 L487.6,452.4 L488.7,452.2 L489.8,452.7 L490.9,452.3 L492.0,452.5 L493.1,452.8 L494.2,452.9 L495.4,452.5 L496.5,452.5 L497.6,453.0 L498.7,452.8 L499.8,452.4 L501.0,452.4 L502.1,452.5 L503.2,453.1 L504.3,453.1 L505.4,452.6 L506.6,453.1 L507.7,453.3 L508.8,453.0 L509.9,452.8 L511.0,453.0 L512.2,452.7 L513.3,452.6 L514.4,453.4 L515.5,453.2 L516.6,453.1 L517.8,453.5 L518.9,453.1 L520.0,453.2 L521.1,453.5 L522.2,453.5 L523.3,453.0 L524.4,453.0 L525.6,453.0 L526.7,453.0 L527.8,453.2 L528.9,453.0 L530.0,453.1 L531.1,452.9 L532.2,453.5 L533.3,453.0 L534.4,453.1 L535.6,453.2 L536.7,453.5 L537.8,453.1 L538.9,453.5 L540.0,453.2 L541.1,453.2 L542.2,453.2 L543.3,452.8 L544.4,453.1 L545.6,452.9 L546.7,452.7 L547.8,453.4 L548.9,452.9 L550.0,453.1 L551.1,453.3 L552.2,453.2 L553.3,453.0 L554.4,453.1 L555.6,453.2 L556.7,453.3 L557.8,452.8 L558.9,453.2 L560.0,453.1 L561.1,452.9 L562.2,452.9 L563.3,453.3 L564.4,453.1 L565.6,453.2 L566.7,453.3 L567.8,453.4 L568.9,453.1 L570.0,453.2 L571.1,453.1 L572.2,453.1 L573.3,453.3 L574.4,453.1 L575.6,453.2 L576.7,453.1 L577.8,453.5 L578.9,453.3 L580.0,453.5 L581.1,453.5 L582.2,453.0 L583.3,453.2 L584.4,453.5 L585.6,453.4 L586.7,452.9 L587.8,452.9 L588.9,453.1 L590.0,452.8 L591.1,453.0 L592.2,452.8 L593.3,453.3 L594.4,453.4 L595.6,453.5 L596.7,452.9 L597.8,453.4 L598.9,453.3 L600.0,453.2 L601.1,452.9 L602.2,453.5 L603.3,453.6 L604.4,453.0 L605.6,453.5 L606.7,453.1 L607.8,453.2 L608.9,453.6 L610.0,453.4 L611.1,452.9 L612.2,453.1 L613.3,453.2 L614.4,453.0 L615.6,452.9 L616.7,453.0 L617.8,453.3 L618.9,452.8 L620.0,453.2 L621.1,453.1 L622.2,452.8 L623.3,453.0 L624.4,453.2 L625.6,453.1 L626.7,452.8 L627.8,453.5 L628.9,453.4 L630.0,453.5 L631.1,452.8 L632.2,452.9 L633.3,452.7 L634.4,453.3 L635.6,452.9 L636.7,452.8 L637.8,453.0 L638.9,453.4 L640.0,453.1 L641.1,453.4 L642.3,452.9 L643.4,452.8 L644.5,453.4 L645.7,453.1 L646.8,453.2 L647.9,452.7 L649.1,452.7 L650.2,453.2 L651.3,453.0 L652.5,452.7 L653.6,453.4 L654.7,453.1 L655.8,453.3 L657.0,452.7 L658.1,453.3 L659.2,452.7 L660.4,453.3 L661.5,453.0 L662.6,452.9 L663.8,453.0 L664.9,453.0" fill="none" stroke="#d8468e" stroke-width="0.95"/><path d="M41.3,58.7 L688.6,58.7 L688.6,467.2 L41.3,467.2 Z" fill="none" stroke="#d4d4d4" stroke-width="1.1"/><line x1="41.8" y1="454.10" x2="44" y2="454.10" stroke="#777" stroke-width="0.6"/><line x1="686" y1="454.10" x2="688.2" y2="454.10" stroke="#777" stroke-width="0.6"/><line x1="41.8" y1="430.35" x2="44" y2="430.35" stroke="#777" stroke-width="0.6"/><line x1="686" y1="430.35" x2="688.2" y2="430.35" stroke="#777" stroke-width="0.6"/><line x1="41.8" y1="406.60" x2="44" y2="406.60" stroke="#777" stroke-width="0.6"/><line x1="686" y1="406.60" x2="688.2" y2="406.60" stroke="#777" stroke-width="0.6"/><line x1="41.8" y1="382.85" x2="44" y2="382.85" stroke="#777" stroke-width="0.6"/><line x1="686" y1="382.85" x2="688.2" y2="382.85" stroke="#777" stroke-width="0.6"/><line x1="41.8" y1="359.10" x2="44" y2="359.10" stroke="#777" stroke-width="0.6"/><line x1="686" y1="359.10" x2="688.2" y2="359.10" stroke="#777" stroke-width="0.6"/><line x1="41.8" y1="335.35" x2="44" y2="335.35" stroke="#777" stroke-width="0.6"/><line x1="686" y1="335.35" x2="688.2" y2="335.35" stroke="#777" stroke-width="0.6"/><line x1="41.8" y1="311.60" x2="44" y2="311.60" stroke="#777" stroke-width="0.6"/><line x1="686" y1="311.60" x2="688.2" y2="311.60" stroke="#777" stroke-width="0.6"/><line x1="41.8" y1="287.85" x2="44" y2="287.85" stroke="#777" stroke-width="0.6"/><line x1="686" y1="287.85" x2="688.2" y2="287.85" stroke="#777" stroke-width="0.6"/><line x1="41.8" y1="264.10" x2="44" y2="264.10" stroke="#777" stroke-width="0.6"/><line x1="686" y1="264.10" x2="688.2" y2="264.10" stroke="#777" stroke-width="0.6"/><line x1="41.8" y1="240.35" x2="44" y2="240.35" stroke="#777" stroke-width="0.6"/><line x1="686" y1="240.35" x2="688.2" y2="240.35" stroke="#777" stroke-width="0.6"/><line x1="41.8" y1="216.60" x2="44" y2="216.60" stroke="#777" stroke-width="0.6"/><line x1="686" y1="216.60" x2="688.2" y2="216.60" stroke="#777" stroke-width="0.6"/><line x1="41.8" y1="192.85" x2="44" y2="192.85" stroke="#777" stroke-width="0.6"/><line x1="686" y1="192.85" x2="688.2" y2="192.85" stroke="#777" stroke-width="0.6"/><line x1="41.8" y1="169.10" x2="44" y2="169.10" stroke="#777" stroke-width="0.6"/><line x1="686" y1="169.10" x2="688.2" y2="169.10" stroke="#777" stroke-width="0.6"/><line x1="41.8" y1="145.35" x2="44" y2="145.35" stroke="#777" stroke-width="0.6"/><line x1="686" y1="145.35" x2="688.2" y2="145.35" stroke="#777" stroke-width="0.6"/><line x1="41.8" y1="121.60" x2="44" y2="121.60" stroke="#777" stroke-width="0.6"/><line x1="686" y1="121.60" x2="688.2" y2="121.60" stroke="#777" stroke-width="0.6"/><line x1="41.8" y1="97.85" x2="44" y2="97.85" stroke="#777" stroke-width="0.6"/><line x1="686" y1="97.85" x2="688.2" y2="97.85" stroke="#777" stroke-width="0.6"/><line x1="41.8" y1="74.10" x2="44" y2="74.10" stroke="#777" stroke-width="0.6"/><line x1="686" y1="74.10" x2="688.2" y2="74.10" stroke="#777" stroke-width="0.6"/><line x1="49.00" y1="466.6" x2="49.00" y2="464" stroke="#aaa" stroke-width="0.7"/><line x1="49.00" y1="58.4" x2="49.00" y2="57.2" stroke="#aaa" stroke-width="0.8"/><line x1="126.70" y1="466.6" x2="126.70" y2="464" stroke="#aaa" stroke-width="0.7"/><line x1="126.70" y1="58.4" x2="126.70" y2="57.2" stroke="#aaa" stroke-width="0.8"/><line x1="204.40" y1="466.6" x2="204.40" y2="464" stroke="#aaa" stroke-width="0.7"/><line x1="204.40" y1="58.4" x2="204.40" y2="57.2" stroke="#aaa" stroke-width="0.8"/><line x1="282.10" y1="466.6" x2="282.10" y2="464" stroke="#aaa" stroke-width="0.7"/><line x1="282.10" y1="58.4" x2="282.10" y2="57.2" stroke="#aaa" stroke-width="0.8"/><line x1="359.80" y1="466.6" x2="359.80" y2="464" stroke="#aaa" stroke-width="0.7"/><line x1="359.80" y1="58.4" x2="359.80" y2="57.2" stroke="#aaa" stroke-width="0.8"/><line x1="437.50" y1="466.6" x2="437.50" y2="464" stroke="#aaa" stroke-width="0.7"/><line x1="437.50" y1="58.4" x2="437.50" y2="57.2" stroke="#aaa" stroke-width="0.8"/><line x1="515.20" y1="466.6" x2="515.20" y2="464" stroke="#aaa" stroke-width="0.7"/><line x1="515.20" y1="58.4" x2="515.20" y2="57.2" stroke="#aaa" stroke-width="0.8"/><line x1="592.90" y1="466.6" x2="592.90" y2="464" stroke="#aaa" stroke-width="0.7"/><line x1="592.90" y1="58.4" x2="592.90" y2="57.2" stroke="#aaa" stroke-width="0.8"/><line x1="670.60" y1="466.6" x2="670.60" y2="464" stroke="#aaa" stroke-width="0.7"/><line x1="670.60" y1="58.4" x2="670.60" y2="57.2" stroke="#aaa" stroke-width="0.8"/><line x1="101" y1="261.3" x2="111.8" y2="261.3" stroke="#f0c8e8" stroke-width="1.2"/><line x1="128" y1="339.2" x2="136" y2="339.2" stroke="#f0c8e8" stroke-width="1.2"/></svg><div class="t" style="top:448.50px;font-size:8.09px;line-height:12px;color:#e6e6e6;right:810.80px;text-align:right;transform-origin:100% 50%;transform:scaleX(0.9091);">2000</div><div class="t" style="top:424.75px;font-size:8.09px;line-height:12px;color:#e6e6e6;right:810.80px;text-align:right;transform-origin:100% 50%;transform:scaleX(0.9091);">4000</div><div class="t" style="top:401.00px;font-size:8.09px;line-height:12px;color:#e6e6e6;right:810.80px;text-align:right;transform-origin:100% 50%;transform:scaleX(0.9091);">6000</div><div class="t" style="top:377.25px;font-size:8.09px;line-height:12px;color:#e6e6e6;right:810.80px;text-align:right;transform-origin:100% 50%;transform:scaleX(0.9091);">8000</div><div class="t" style="top:353.50px;font-size:8.09px;line-height:12px;color:#e6e6e6;right:810.80px;text-align:right;transform-origin:100% 50%;transform:scaleX(0.9091);">10000</div><div class="t" style="top:329.75px;font-size:8.09px;line-height:12px;color:#e6e6e6;right:810.80px;text-align:right;transform-origin:100% 50%;transform:scaleX(0.9091);">12000</div><div class="t" style="top:306.00px;font-size:8.09px;line-height:12px;color:#e6e6e6;right:810.80px;text-align:right;transform-origin:100% 50%;transform:scaleX(0.9091);">14000</div><div class="t" style="top:282.25px;font-size:8.09px;line-height:12px;color:#e6e6e6;right:810.80px;text-align:right;transform-origin:100% 50%;transform:scaleX(0.9091);">16000</div><div class="t" style="top:258.50px;font-size:8.09px;line-height:12px;color:#e6e6e6;right:810.80px;text-align:right;transform-origin:100% 50%;transform:scaleX(0.9091);">18000</div><div class="t" style="top:234.75px;font-size:8.09px;line-height:12px;color:#e6e6e6;right:810.80px;text-align:right;transform-origin:100% 50%;transform:scaleX(0.9091);">20000</div><div class="t" style="top:211.00px;font-size:8.09px;line-height:12px;color:#e6e6e6;right:810.80px;text-align:right;transform-origin:100% 50%;transform:scaleX(0.9091);">22000</div><div class="t" style="top:187.25px;font-size:8.09px;line-height:12px;color:#e6e6e6;right:810.80px;text-align:right;transform-origin:100% 50%;transform:scaleX(0.9091);">24000</div><div class="t" style="top:163.50px;font-size:8.09px;line-height:12px;color:#e6e6e6;right:810.80px;text-align:right;transform-origin:100% 50%;transform:scaleX(0.9091);">26000</div><div class="t" style="top:139.75px;font-size:8.09px;line-height:12px;color:#e6e6e6;right:810.80px;text-align:right;transform-origin:100% 50%;transform:scaleX(0.9091);">28000</div><div class="t" style="top:116.00px;font-size:8.09px;line-height:12px;color:#e6e6e6;right:810.80px;text-align:right;transform-origin:100% 50%;transform:scaleX(0.9091);">30000</div><div class="t" style="top:92.25px;font-size:8.09px;line-height:12px;color:#e6e6e6;right:810.80px;text-align:right;transform-origin:100% 50%;transform:scaleX(0.9091);">32000</div><div class="t" style="top:68.50px;font-size:8.09px;line-height:12px;color:#e6e6e6;right:810.80px;text-align:right;transform-origin:100% 50%;transform:scaleX(0.9091);">34000</div><div class="t" style="top:469.40px;font-size:8.09px;line-height:12px;color:#e6e6e6;left:-51.00px;width:200px;text-align:center;transform-origin:50% 50%;transform:scaleX(0.9091);">300</div><div class="t" style="top:469.40px;font-size:8.09px;line-height:12px;color:#e6e6e6;left:26.70px;width:200px;text-align:center;transform-origin:50% 50%;transform:scaleX(0.9091);">400</div><div class="t" style="top:469.40px;font-size:8.09px;line-height:12px;color:#e6e6e6;left:104.40px;width:200px;text-align:center;transform-origin:50% 50%;transform:scaleX(0.9091);">500</div><div class="t" style="top:469.40px;font-size:8.09px;line-height:12px;color:#e6e6e6;left:182.10px;width:200px;text-align:center;transform-origin:50% 50%;transform:scaleX(0.9091);">600</div><div class="t" style="top:469.40px;font-size:8.09px;line-height:12px;color:#e6e6e6;left:259.80px;width:200px;text-align:center;transform-origin:50% 50%;transform:scaleX(0.9091);">700</div><div class="t" style="top:469.40px;font-size:8.09px;line-height:12px;color:#e6e6e6;left:337.50px;width:200px;text-align:center;transform-origin:50% 50%;transform:scaleX(0.9091);">800</div><div class="t" style="top:469.40px;font-size:8.09px;line-height:12px;color:#e6e6e6;left:415.20px;width:200px;text-align:center;transform-origin:50% 50%;transform:scaleX(0.9091);">900</div><div class="t" style="top:469.40px;font-size:8.09px;line-height:12px;color:#e6e6e6;left:492.90px;width:200px;text-align:center;transform-origin:50% 50%;transform:scaleX(0.9091);">1000</div><div class="t" style="top:469.40px;font-size:8.09px;line-height:12px;color:#e6e6e6;left:570.60px;width:200px;text-align:center;transform-origin:50% 50%;transform:scaleX(0.9091);">1100</div><div class="t" style="top:71.70px;font-size:8.18px;line-height:12px;color:#f0f0f0;left:102.70px;transform-origin:0 50%;transform:scaleX(0.9091);">372.9</div><div class="t" style="top:264.40px;font-size:8.03px;line-height:12px;color:#f0f0f0;left:103.60px;transform-origin:0 50%;transform:scaleX(0.9091);">13.0</div><div class="t" style="top:272.20px;font-size:8.22px;line-height:12px;color:#f0f0f0;left:129.20px;transform-origin:0 50%;transform:scaleX(0.9091);">406.2</div><div class="t" style="top:342.00px;font-size:7.86px;line-height:12px;color:#f0f0f0;left:130.10px;transform-origin:0 50%;transform:scaleX(0.9091);">10.4</div><div class="t" style="top:486.40px;font-size:12.05px;line-height:12px;color:#f2f2f2;left:323.00px;transform-origin:0 50%;transform:scaleX(0.9091);">Wavelength (nm)</div><div class="t" style="left:-8.4px;top:259.5px;width:34px;font-size:11px;line-height:12px;color:#f2f2f2;transform:rotate(-90deg);text-align:center">Counts</div><div class="t" style="top:56.90px;font-size:9.90px;line-height:12px;color:#d4d4d4;font-weight:bold;font-style:italic;left:691.70px;transform-origin:0 50%;transform:scaleX(0.8646);">Spectra</div><div class="t" style="top:70.60px;font-size:8.00px;line-height:12px;color:#cfcfcf;left:694.60px;transform-origin:0 50%;transform:scaleX(0.9080);">Workspace</div><div class="a" style="left:691.50px;top:84.00px;width:153.70px;height:227.40px;background:#3f3f3f;border:1px solid #4e4e4e;"></div><div class="a" style="left:691.00px;top:83.00px;width:45.00px;height:1.40px;background:#2a82da;"></div><div class="a" style="left:692.50px;top:85.00px;width:151.70px;height:21.30px;background:#414141;"></div><div class="a" style="left:694.00px;top:106.30px;width:149.60px;height:201.70px;background:#2b2b2b;"></div><svg class="a" style="left:700px;top:89.5px" width="90" height="12" viewBox="0 0 90 12">
<path d="M2.3,1.2 L6.1,1.2 M2.9,1.2 L2.9,5.5 L1.6,7 L6.8,7 L5.5,5.5 L5.5,1.2 M4.2,7 L4.2,10.3" fill="none" stroke="#9a9a9a" stroke-width="0.9"/>
<path d="M19.1,2.6 Q19.1,1.5 22.25,1.5 Q25.4,1.5 25.4,2.6 L25.4,9.4 Q25.4,9.8 25,9.8 L19.5,9.8 Q19.1,9.8 19.1,9.4 Z" fill="#f0f0f0"/><ellipse cx="22.25" cy="2.4" rx="2.6" ry="0.5" fill="#d8d8d8"/>
<circle cx="40.8" cy="5.7" r="4.1" fill="none" stroke="#f0f0f0" stroke-width="1.2"/><path d="M37.9,2.8 L43.7,8.6" stroke="#f0f0f0" stroke-width="1.2"/>
<rect x="52.4" y="0.8" width="0.7" height="10" fill="#555"/>
<path d="M59.6,3.5 L59.6,9.7 L65.5,9.7" fill="none" stroke="#f0f0f0" stroke-width="1.1"/>
<rect x="61" y="1.2" width="6.9" height="7" fill="#f0f0f0"/><path d="M62.5,4.5 L63.9,5.8 L66.3,3.3" fill="none" stroke="#404040" stroke-width="1.3"/>
<path d="M77.8,3.6 L77.8,9.7 L83.8,9.7" fill="none" stroke="#f0f0f0" stroke-width="1.1"/>
<rect x="79.4" y="1.5" width="6.6" height="6.6" fill="none" stroke="#f0f0f0" stroke-width="1.3"/>
</svg><div class="a" style="left:696.30px;top:107.50px;width:9.30px;height:10.20px;background:#262626;border:1px solid #585858;"></div><div class="t" style="top:107.00px;font-size:8.00px;line-height:12px;color:#2aa2c6;left:709.90px;transform-origin:0 50%;transform:scaleX(0.9769);">Spectrum 3174</div><div class="a" style="left:696.30px;top:117.70px;width:9.30px;height:10.20px;background:#262626;border:1px solid #585858;"></div><div class="t" style="top:117.20px;font-size:8.00px;line-height:12px;color:#c32a2a;left:709.90px;transform-origin:0 50%;transform:scaleX(0.9769);">Spectrum 3175</div><div class="a" style="left:696.30px;top:127.90px;width:9.30px;height:10.20px;background:#262626;border:1px solid #585858;"></div><div class="t" style="top:127.40px;font-size:8.00px;line-height:12px;color:#2b8ad0;left:709.90px;transform-origin:0 50%;transform:scaleX(0.9769);">Spectrum 3176</div><div class="a" style="left:696.30px;top:138.10px;width:9.30px;height:10.20px;background:#262626;border:1px solid #585858;"></div><div class="t" style="top:137.60px;font-size:8.00px;line-height:12px;color:#d38a22;left:709.90px;transform-origin:0 50%;transform:scaleX(0.9769);">Spectrum 3177</div><div class="a" style="left:696.30px;top:148.30px;width:9.30px;height:10.20px;background:#262626;border:1px solid #585858;"></div><div class="t" style="top:147.80px;font-size:8.00px;line-height:12px;color:#2a78d0;left:709.90px;transform-origin:0 50%;transform:scaleX(0.9769);">Spectrum 3178</div><div class="a" style="left:696.30px;top:158.50px;width:9.30px;height:10.20px;background:#262626;border:1px solid #585858;"></div><div class="t" style="top:158.00px;font-size:8.00px;line-height:12px;color:#2aa0cf;left:709.90px;transform-origin:0 50%;transform:scaleX(0.9769);">Spectrum 3179</div><div class="a" style="left:696.30px;top:168.70px;width:9.30px;height:10.20px;background:#262626;border:1px solid #585858;"></div><div class="t" style="top:168.20px;font-size:8.00px;line-height:12px;color:#22c264;left:709.90px;transform-origin:0 50%;transform:scaleX(0.9769);">Spectrum 3180</div><div class="a" style="left:696.30px;top:178.90px;width:9.30px;height:10.20px;background:#262626;border:1px solid #585858;"></div><div class="t" style="top:178.40px;font-size:8.00px;line-height:12px;color:#5a33c8;left:709.90px;transform-origin:0 50%;transform:scaleX(0.9769);">Spectrum 3181</div><div class="a" style="left:696.30px;top:189.10px;width:9.30px;height:10.20px;background:#262626;border:1px solid #585858;"></div><div class="t" style="top:188.60px;font-size:8.00px;line-height:12px;color:#3a72c8;left:709.90px;transform-origin:0 50%;transform:scaleX(0.9769);">Spectrum 3182</div><div class="a" style="left:696.30px;top:199.30px;width:9.30px;height:10.20px;background:#262626;border:1px solid #585858;"></div><div class="t" style="top:198.80px;font-size:8.00px;line-height:12px;color:#c2622a;left:709.90px;transform-origin:0 50%;transform:scaleX(0.9769);">Spectrum 3183</div><div class="a" style="left:696.30px;top:209.50px;width:9.30px;height:10.20px;background:#262626;border:1px solid #585858;"></div><div class="t" style="top:209.00px;font-size:8.00px;line-height:12px;color:#6a2cb2;left:709.90px;transform-origin:0 50%;transform:scaleX(0.9769);">Spectrum 3184</div><div class="a" style="left:696.30px;top:219.70px;width:9.30px;height:10.20px;background:#262626;border:1px solid #585858;"></div><div class="t" style="top:219.20px;font-size:8.00px;line-height:12px;color:#b92c2c;left:709.90px;transform-origin:0 50%;transform:scaleX(0.9769);">Spectrum 3185</div><div class="a" style="left:696.30px;top:229.90px;width:9.30px;height:10.20px;background:#262626;border:1px solid #585858;"></div><div class="t" style="top:229.40px;font-size:8.00px;line-height:12px;color:#b12cc8;left:709.90px;transform-origin:0 50%;transform:scaleX(0.9769);">Spectrum 3186</div><div class="a" style="left:696.30px;top:240.10px;width:9.30px;height:10.20px;background:#262626;border:1px solid #585858;"></div><div class="t" style="top:239.60px;font-size:8.00px;line-height:12px;color:#d0a222;left:709.90px;transform-origin:0 50%;transform:scaleX(0.9769);">Spectrum 3187</div><div class="a" style="left:696.30px;top:250.30px;width:9.30px;height:10.20px;background:#262626;border:1px solid #585858;"></div><div class="t" style="top:249.80px;font-size:8.00px;line-height:12px;color:#c3b032;left:709.90px;transform-origin:0 50%;transform:scaleX(0.9769);">Spectrum 3188</div><div class="a" style="left:696.30px;top:260.50px;width:9.30px;height:10.20px;background:#262626;border:1px solid #585858;"></div><div class="t" style="top:260.00px;font-size:8.00px;line-height:12px;color:#30c0b2;left:709.90px;transform-origin:0 50%;transform:scaleX(0.9769);">Spectrum 3189</div><div class="a" style="left:696.30px;top:270.70px;width:9.30px;height:10.20px;background:#262626;border:1px solid #585858;"></div><div class="t" style="top:270.20px;font-size:8.00px;line-height:12px;color:#3242b8;left:709.90px;transform-origin:0 50%;transform:scaleX(0.9769);">Spectrum 3190</div><div class="a" style="left:696.30px;top:280.90px;width:9.30px;height:10.20px;background:#262626;border:1px solid #585858;"></div><div class="t" style="top:280.40px;font-size:8.00px;line-height:12px;color:#a32a82;left:709.90px;transform-origin:0 50%;transform:scaleX(0.9769);">Spectrum 3191</div><div class="a" style="left:694.50px;top:290.80px;width:137.70px;height:10.40px;background:#3a90e6;"></div><div class="a" style="left:696.30px;top:291.10px;width:9.30px;height:10.20px;background:#262626;border:1px solid #5c5c5c;"></div><svg class="a" style="left:697px;top:292.20px" width="8" height="8" viewBox="0 0 8 8"><path d="M1.3,4 L3.2,6.4 L6.8,1" fill="none" stroke="#e8559e" stroke-width="1.2"/></svg><div class="t" style="top:290.60px;font-size:8.00px;line-height:12px;color:#cfdff0;left:709.90px;transform-origin:0 50%;transform:scaleX(0.9769);">Spectrum 3192</div><div class="a" style="left:834.00px;top:293.90px;width:5.70px;height:13.50px;background:#4a4a4a;border-radius:1px"></div><svg class="a" style="left:763.5px;top:313px" width="13" height="3" viewBox="0 0 13 3"><rect x="0.30" y="0.6" width="0.9" height="1.1" fill="#8a8a8a"/><rect x="1.95" y="0.6" width="0.9" height="1.1" fill="#8a8a8a"/><rect x="3.60" y="0.6" width="0.9" height="1.1" fill="#8a8a8a"/><rect x="5.25" y="0.6" width="0.9" height="1.1" fill="#8a8a8a"/><rect x="6.90" y="0.6" width="0.9" height="1.1" fill="#8a8a8a"/><rect x="8.55" y="0.6" width="0.9" height="1.1" fill="#8a8a8a"/><rect x="10.20" y="0.6" width="0.9" height="1.1" fill="#8a8a8a"/></svg><div class="t" style="top:316.40px;font-size:9.90px;line-height:12px;color:#d4d4d4;font-weight:bold;font-style:italic;left:691.70px;transform-origin:0 50%;transform:scaleX(0.8638);">Properties</div><div class="t" style="top:330.70px;font-size:8.00px;line-height:12px;color:#cfcfcf;left:695.60px;transform-origin:0 50%;transform:scaleX(0.8968);">Spectrum</div><div class="t" style="top:330.70px;font-size:8.00px;line-height:12px;color:#cfcfcf;left:734.00px;transform-origin:0 50%;transform:scaleX(0.9113);">Data</div><div class="a" style="left:691.50px;top:344.00px;width:153.70px;height:197.30px;background:#424242;border:1px solid #4e4e4e;"></div><div class="a" style="left:691.00px;top:343.00px;width:39.80px;height:1.40px;background:#2a82da;"></div><div class="a" style="left:694.80px;top:346.00px;width:147.50px;height:10.60px;background:#3c3c3c;"></div><div class="t" style="top:346.90px;font-size:8.00px;line-height:12px;color:#c8c8c8;left:695.00px;transform-origin:0 50%;transform:scaleX(0.9076);">Current Spectrum</div><div class="a" style="left:694.80px;top:356.30px;width:147.50px;height:183.00px;background:#3b3b3b;border-top:1px solid #474747"></div><div class="t" style="top:361.90px;font-size:8.00px;line-height:12px;color:#c8c8c8;left:696.20px;transform-origin:0 50%;transform:scaleX(0.8700);">Name:</div><div class="a" style="left:737.30px;top:359.20px;width:103.10px;height:14.50px;background:#2b2b2b;"></div><div class="t" style="top:361.70px;font-size:8.00px;line-height:12px;color:#dcdcdc;left:738.80px;transform-origin:0 50%;transform:scaleX(0.9124);">Spectrum 3192</div><div class="t" style="top:376.30px;font-size:8.00px;line-height:12px;color:#c8c8c8;left:696.20px;transform-origin:0 50%;transform:scaleX(0.8798);">Timestamp:</div><div class="t" style="top:376.30px;font-size:8.00px;line-height:12px;color:#c8c8c8;left:737.00px;transform-origin:0 50%;transform:scaleX(0.9358);">2021-Dec-22 09:18:24</div><div class="t" style="top:389.20px;font-size:8.00px;line-height:12px;color:#c8c8c8;left:696.20px;transform-origin:0 50%;transform:scaleX(0.8997);">Device:</div><div class="t" style="top:389.20px;font-size:8.00px;line-height:12px;color:#c8c8c8;left:737.00px;transform-origin:0 50%;transform:scaleX(0.8940);">Ossila Spectrometer (COM3)</div><div class="t" style="top:400.70px;font-size:8.00px;line-height:12px;color:#c8c8c8;left:696.20px;transform-origin:0 50%;transform:scaleX(0.9074);">Colour:</div><div class="a" style="left:737.90px;top:402.50px;width:15.90px;height:7.70px;background:#e6559d;border-radius:1px"></div><div class="t" style="top:413.20px;font-size:8.00px;line-height:12px;color:#c8c8c8;left:696.20px;transform-origin:0 50%;transform:scaleX(0.8998);">Comments:</div><div class="a" style="left:696.40px;top:426.30px;width:143.90px;height:33.80px;background:#2b2b2b;"></div><div class="t" style="top:429.10px;font-size:8.00px;line-height:12px;color:#767676;left:699.70px;transform-origin:0 50%;transform:scaleX(0.9060);">Type spectrum comments here</div><div class="t" style="top:465.90px;font-size:8.00px;line-height:12px;color:#c8c8c8;left:697.70px;transform-origin:0 50%;transform:scaleX(0.9339);">Integration Time: 0.05 ms</div><div class="t" style="top:477.90px;font-size:8.00px;line-height:12px;color:#c8c8c8;left:697.70px;transform-origin:0 50%;transform:scaleX(0.8985);">Accumulation Number: 1</div><div class="t" style="top:490.00px;font-size:8.00px;line-height:12px;color:#c8c8c8;left:697.70px;transform-origin:0 50%;transform:scaleX(0.9185);">Averaging Number: 1</div><div class="t" style="top:502.40px;font-size:8.00px;line-height:12px;color:#c8c8c8;left:697.70px;transform-origin:0 50%;transform:scaleX(0.8979);">Delay Time: 0 s</div><div class="t" style="top:514.70px;font-size:8.00px;line-height:12px;color:#c8c8c8;left:697.70px;transform-origin:0 50%;transform:scaleX(0.9387);">Trigger Mode: Internal</div><div class="t" style="top:526.60px;font-size:8.00px;line-height:12px;color:#c8c8c8;left:697.70px;transform-origin:0 50%;transform:scaleX(0.9386);">Measurment Type: Intensity</div><div class="a" style="left:0.00px;top:497.90px;width:689.50px;height:2.40px;background:#3e3e3e;"></div><div class="t" style="top:500.40px;font-size:8.00px;line-height:12px;color:#c8c8c8;left:1.00px;transform-origin:0 50%;transform:scaleX(0.9108);">Measurement Settings</div><div class="a" style="left:0.60px;top:510.60px;width:101.90px;height:30.40px;background:#3a3a3a;border:1px solid #474747;"></div><div class="t" style="top:514.00px;font-size:8.00px;line-height:12px;color:#c8c8c8;left:3.20px;transform-origin:0 50%;transform:scaleX(0.9279);">Trigger:</div><div class="t" style="top:527.70px;font-size:8.00px;line-height:12px;color:#c8c8c8;left:3.20px;transform-origin:0 50%;transform:scaleX(0.9710);">Type:</div><div class="a" style="left:32.00px;top:513.10px;width:65.90px;height:11.70px;background:#343434;border:1px solid #4a4a4a;border-radius:1px"></div><div class="t" style="top:513.35px;font-size:8.00px;line-height:12px;color:#d0d0d0;left:34.40px;transform-origin:0 50%;transform:scaleX(0.9706);">Internal</div><svg class="a" style="left:88.7px;top:516.95px" width="5" height="4" viewBox="0 0 5 4"><path d="M0.6,1.2 L2.5,3 L4.4,1.2" fill="none" stroke="#c8c8c8" stroke-width="1.3" stroke-linejoin="round"/></svg><div class="a" style="left:32.00px;top:527.50px;width:65.90px;height:11.60px;background:#343434;border:1px solid #4a4a4a;border-radius:1px"></div><div class="t" style="top:527.70px;font-size:8.00px;line-height:12px;color:#d0d0d0;left:34.40px;transform-origin:0 50%;transform:scaleX(0.9801);">Intensity</div><svg class="a" style="left:88.7px;top:531.30px" width="5" height="4" viewBox="0 0 5 4"><path d="M0.6,1.2 L2.5,3 L4.4,1.2" fill="none" stroke="#c8c8c8" stroke-width="1.3" stroke-linejoin="round"/></svg><div class="t" style="top:500.10px;font-size:8.00px;line-height:12px;color:#c8c8c8;left:106.30px;transform-origin:0 50%;transform:scaleX(0.9110);">Plot Properties</div><div class="a" style="left:105.80px;top:510.70px;width:126.20px;height:30.50px;background:#3a3a3a;border:1px solid #474747;"></div><div class="a" style="left:110.70px;top:514.40px;width:8.80px;height:8.40px;background:#2c2c2c;border-radius:1px"></div><svg class="a" style="left:110.70px;top:514.40px" width="9" height="9" viewBox="0 0 9 9"><path d="M1.8,4.3 L3.7,7 L7.2,1.4" fill="none" stroke="#e4e4e4" stroke-width="1"/></svg><div class="t" style="top:513.00px;font-size:8.00px;line-height:12px;color:#c8c8c8;left:122.30px;transform-origin:0 50%;transform:scaleX(0.8680);">Peaks</div><div class="a" style="left:150.30px;top:514.40px;width:8.80px;height:8.40px;background:#2c2c2c;border-radius:1px"></div><svg class="a" style="left:150.30px;top:514.40px" width="9" height="9" viewBox="0 0 9 9"><path d="M1.8,4.3 L3.7,7 L7.2,1.4" fill="none" stroke="#e4e4e4" stroke-width="1"/></svg><div class="t" style="top:513.00px;font-size:8.00px;line-height:12px;color:#c8c8c8;left:161.90px;transform-origin:0 50%;transform:scaleX(0.9372);">Autorange</div><div class="a" style="left:201.50px;top:514.40px;width:8.80px;height:8.40px;background:#2c2c2c;border-radius:1px"></div><div class="t" style="top:513.00px;font-size:8.00px;line-height:12px;color:#c8c8c8;left:213.50px;transform-origin:0 50%;transform:scaleX(0.8734);">Grid</div><div class="a" style="left:110.70px;top:528.40px;width:8.80px;height:8.40px;background:#2c2c2c;border-radius:1px"></div><svg class="a" style="left:110.70px;top:528.40px" width="9" height="9" viewBox="0 0 9 9"><path d="M1.8,4.3 L3.7,7 L7.2,1.4" fill="none" stroke="#e4e4e4" stroke-width="1"/></svg><div class="t" style="top:527.00px;font-size:8.00px;line-height:12px;color:#c8c8c8;left:122.30px;transform-origin:0 50%;transform:scaleX(0.9244);">Widths</div><div class="a" style="left:150.30px;top:528.40px;width:8.80px;height:8.40px;background:#2c2c2c;border-radius:1px"></div><svg class="a" style="left:150.30px;top:528.40px" width="9" height="9" viewBox="0 0 9 9"><path d="M1.8,4.3 L3.7,7 L7.2,1.4" fill="none" stroke="#e4e4e4" stroke-width="1"/></svg><div class="t" style="top:527.00px;font-size:8.00px;line-height:12px;color:#c8c8c8;left:161.90px;transform-origin:0 50%;transform:scaleX(0.8880);">Spectrum Colour</div><div class="t" style="top:500.60px;font-size:8.00px;line-height:12px;color:#c8c8c8;left:235.30px;transform-origin:0 50%;transform:scaleX(0.8998);">Cursor</div><div class="a" style="left:235.10px;top:510.70px;width:67.70px;height:30.20px;background:#3a3a3a;border:1px solid #474747;"></div><div class="t" style="top:514.00px;font-size:8.00px;line-height:12px;color:#c8c8c8;left:241.60px;transform-origin:0 50%;transform:scaleX(0.9543);">x: 316.0918</div><div class="t" style="top:526.90px;font-size:8.00px;line-height:12px;color:#c8c8c8;left:241.60px;transform-origin:0 50%;transform:scaleX(0.9544);">y: 12799.8460</div><div class="a" style="left:544.00px;top:547.50px;width:0.90px;height:13.10px;background:#6a6a6a;"></div><div class="t" style="top:549.90px;font-size:8.00px;line-height:12px;color:#c8c8c8;left:549.00px;transform-origin:0 50%;transform:scaleX(0.9302);">Device status: Idle</div><div class="a" style="left:615.00px;top:547.50px;width:0.90px;height:13.10px;background:#6a6a6a;"></div><div class="t" style="top:549.90px;font-size:8.00px;line-height:12px;color:#c8c8c8;left:620.20px;transform-origin:0 50%;transform:scaleX(0.8954);">Background selected: False</div><div class="a" style="left:714.00px;top:547.50px;width:0.90px;height:13.10px;background:#6a6a6a;"></div><div class="t" style="top:549.90px;font-size:8.00px;line-height:12px;color:#c8c8c8;left:718.90px;transform-origin:0 50%;transform:scaleX(0.9114);">Reference selected: False</div><div class="a" style="left:809.00px;top:547.50px;width:0.90px;height:13.10px;background:#6a6a6a;"></div><div class="t" style="top:549.90px;font-size:8.00px;line-height:12px;color:#c8c8c8;left:813.80px;transform-origin:0 50%;transform:scaleX(0.8380);">FPS:</div><svg class="a" style="left:839.4px;top:554px" width="9" height="9" viewBox="0 0 9 9"><rect x="7.4" y="0.2" width="1.1" height="1.1" fill="#9a9a9a"/><rect x="5.6" y="2.0" width="1.1" height="1.1" fill="#9a9a9a"/><rect x="7.4" y="2.0" width="1.1" height="1.1" fill="#9a9a9a"/><rect x="3.8" y="3.8" width="1.1" height="1.1" fill="#9a9a9a"/><rect x="5.6" y="3.8" width="1.1" height="1.1" fill="#9a9a9a"/><rect x="7.4" y="3.8" width="1.1" height="1.1" fill="#9a9a9a"/><rect x="2.0" y="5.6" width="1.1" height="1.1" fill="#9a9a9a"/><rect x="3.8" y="5.6" width="1.1" height="1.1" fill="#9a9a9a"/><rect x="5.6" y="5.6" width="1.1" height="1.1" fill="#9a9a9a"/><rect x="7.4" y="5.6" width="1.1" height="1.1" fill="#9a9a9a"/><rect x="0.2" y="7.4" width="1.1" height="1.1" fill="#9a9a9a"/><rect x="2.0" y="7.4" width="1.1" height="1.1" fill="#9a9a9a"/><rect x="3.8" y="7.4" width="1.1" height="1.1" fill="#9a9a9a"/><rect x="5.6" y="7.4" width="1.1" height="1.1" fill="#9a9a9a"/><rect x="7.4" y="7.4" width="1.1" height="1.1" fill="#9a9a9a"/></svg></body></html>
